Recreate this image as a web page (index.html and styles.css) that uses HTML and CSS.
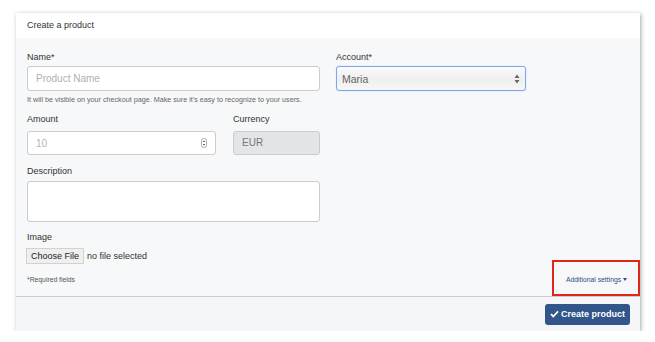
FILE: index.html
```
<!DOCTYPE html>
<html lang="en">
<head>
    <meta charset="UTF-8">
    <title>Create a product</title>
    <link rel="stylesheet" href="styles.css">
</head>
<body>
    <div class="card">
        <div class="card-header">Create a product</div>
        <div class="card-body">
            <div class="row">
                <div class="field field-name">
                    <label class="label">Name*</label>
                    <input class="input" type="text" placeholder="Product Name">
                    <div class="help">It will be visible on your checkout page. Make sure it's easy to recognize to your users.</div>
                </div>
                <div class="field field-account">
                    <label class="label">Account*</label>
                    <div class="select">
                        <span>Maria</span>
                        <svg class="updown" width="6" height="10" viewBox="0 0 6 10"><path d="M3 0.5L5.5 4H0.5Z M3 9.5L5.5 6H0.5Z" fill="#666"/></svg>
                    </div>
                </div>
            </div>
            <div class="row row-amount">
                <div class="field field-amount">
                    <label class="label">Amount</label>
                    <div class="input amount">
                        <span class="placeholder">10</span>
                        <svg class="spin" width="6" height="10" viewBox="0 0 6 10"><rect x="0.5" y="0.5" width="5" height="9" rx="2" fill="none" stroke="#999" stroke-width="0.8"/><path d="M3 2.3L4.2 4H1.8Z M3 7.7L4.2 6H1.8Z" fill="#555"/></svg>
                    </div>
                </div>
                <div class="field field-currency">
                    <label class="label">Currency</label>
                    <div class="input disabled">EUR</div>
                </div>
            </div>
            <div class="field field-desc">
                <label class="label">Description</label>
                <div class="textarea"></div>
            </div>
            <div class="field field-image">
                <label class="label">Image</label>
                <div class="file">
                    <span class="file-btn">Choose File</span>
                    <span class="file-name">no file selected</span>
                </div>
            </div>
            <div class="bottom-row">
                <span class="required">*Required fields</span>
                <span class="additional">Additional settings <span class="caret"></span></span>
            </div>
        </div>
        <div class="card-footer">
            <button class="btn-create">
                <svg width="9" height="8" viewBox="0 0 9 8"><path d="M1 4.2L3.3 6.5L8 1.3" fill="none" stroke="#fff" stroke-width="1.8"/></svg>
                Create product
            </button>
        </div>
    </div>
</body>
</html>
```

FILE: styles.css
```
body {
    margin: 0;
    background: #fff;
    font-family: 'Liberation Sans', Arial, sans-serif;
    color: #333;
}

.card {
    width: 624px;
    margin: 13px 0 0 16px;
    background: #f7f8f9;
    box-shadow: 1px 1px 4px rgba(0, 0, 0, 0.35);
}

.card-header {
    background: #fff;
    height: 25px;
    line-height: 24px;
    padding-left: 11px;
    font-size: 9px;
    color: #333;
}

.card-body {
    padding: 13px 11px 13px 11px;
    height: 258px;
    box-sizing: border-box;
    display: flex;
    flex-direction: column;
}

.row {
    display: flex;
    gap: 16px;
}

.field {
    display: flex;
    flex-direction: column;
}

.label {
    font-size: 9px;
    line-height: 12px;
    color: #333;
    margin-bottom: 3px;
}

.input {
    box-sizing: border-box;
    height: 25px;
    border: 1px solid #ccc;
    border-radius: 3px;
    background: #fff;
    font-family: inherit;
    font-size: 10px;
    padding: 0 8px;
    color: #555;
    outline: none;
}

.input::placeholder {
    color: #b0b0b0;
}

.field-name {
    width: 293px;
}

.help {
    font-size: 7.2px;
    color: #666;
    margin-top: 4px;
    white-space: nowrap;
}

.field-account {
    width: 190px;
}

.select {
    box-sizing: border-box;
    height: 25px;
    border: 1px solid #7ba6ef;
    border-radius: 3px;
    background: linear-gradient(#fbfbfb, #efefef 50%, #f7f7f7);
    display: flex;
    align-items: center;
    justify-content: space-between;
    padding: 0 5px;
    font-size: 10.5px;
    color: #666;
    box-shadow: 0 0 1px #9bbcf5;
}

.row-amount {
    margin-top: 9px;
}

.row-amount .label {
    margin-bottom: 6px;
}

.field-amount {
    width: 189px;
}

.amount {
    height: 24px;
    display: flex;
    align-items: center;
    justify-content: space-between;
}

.placeholder {
    color: #b5b5b5;
}

.field-currency {
    width: 87px;
    margin-left: 1px;
}

.disabled {
    height: 24px;
    background: #e4e5e6;
    color: #777;
    line-height: 22px;
    font-size: 10px;
}

.field-desc {
    width: 293px;
    margin-top: 10px;
}

.field-desc .label {
    margin-bottom: 4px;
}

.textarea {
    height: 41px;
    border: 1px solid #ccc;
    border-radius: 3px;
    background: #fff;
    box-sizing: border-box;
}

.field-image {
    margin-top: 9px;
}

.field-image .label {
    margin-bottom: 5px;
}

.file {
    display: flex;
    align-items: center;
    font-size: 9px;
}

.file-btn {
    box-sizing: border-box;
    height: 16px;
    line-height: 14px;
    padding: 0 4px;
    background: #efefef;
    border: 1px solid #d2d2d2;
    color: #222;
    margin-left: -1px;
}

.file-name {
    margin-left: 3px;
    color: #333;
}

.bottom-row {
    margin-top: auto;
    display: flex;
    justify-content: space-between;
    align-items: center;
    font-size: 6.8px;
}

.required {
    color: #555;
}

.additional {
    color: #2f4f80;
    position: relative;
    padding-right: 1px;
    margin-right: 1px;
}

.additional::before {
    content: '';
    position: absolute;
    left: -14px;
    right: -12px;
    top: -16px;
    bottom: -13px;
    border: 2px solid #e0251b;
}

.caret {
    display: inline-block;
    border-left: 2.5px solid transparent;
    border-right: 2.5px solid transparent;
    border-top: 3px solid #2f4f80;
    vertical-align: 1px;
}

.card-footer {
    border-top: 1px solid #ccc;
    height: 35px;
    box-sizing: border-box;
    display: flex;
    justify-content: flex-end;
    align-items: center;
    padding-right: 10px;
    background: #f5f6f7;
}

.btn-create {
    height: 21px;
    width: 85px;
    background: #32558a;
    color: #fff;
    border: none;
    border-radius: 3px;
    font-family: inherit;
    font-size: 9px;
    font-weight: bold;
    display: flex;
    align-items: center;
    justify-content: center;
    gap: 2px;
    padding: 0;
}
```
